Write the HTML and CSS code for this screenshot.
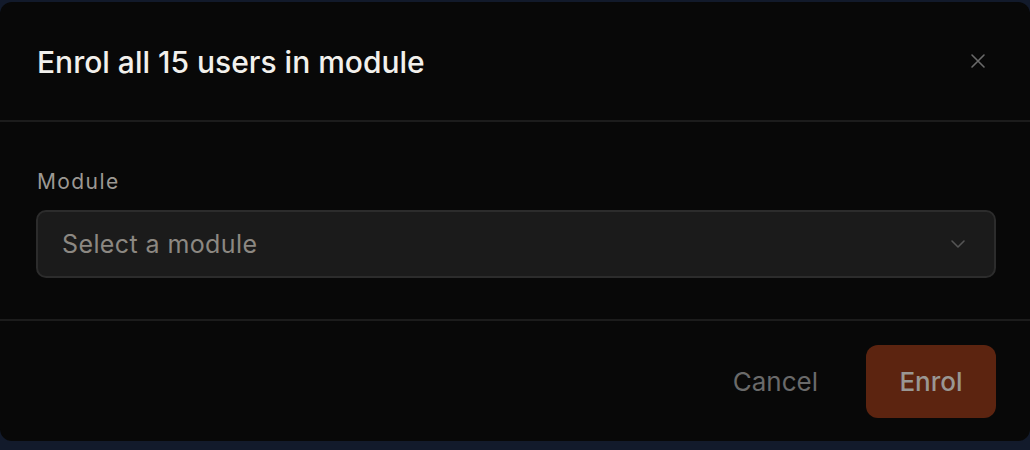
FILE: index.html
```html
<!DOCTYPE html>
<html lang="en">
<head>
<meta charset="utf-8">
<title>Enrol users</title>
<link rel="stylesheet" href="styles.css">
</head>
<body>
<div class="backdrop">
  <div class="dialog" role="dialog" aria-labelledby="dlg-title">
    <header class="dialog-header">
      <h2 id="dlg-title" class="dialog-title">Enrol all 15 users in module</h2>
      <button class="close-btn" aria-label="Close">
        <svg width="16" height="16" viewBox="0 0 16 16" fill="none" stroke="currentColor" stroke-width="1.6" stroke-linecap="round"><path d="M2 2 L14 14 M14 2 L2 14"/></svg>
      </button>
    </header>
    <div class="dialog-body">
      <label class="field-label">Module</label>
      <div class="select">
        <span class="select-placeholder">Select a module</span>
        <svg class="chevron" width="16" height="10" viewBox="0 0 16 10" fill="none" stroke="currentColor" stroke-width="1.6" stroke-linecap="round" stroke-linejoin="round"><path d="M2 2 L8 8 L14 2"/></svg>
      </div>
    </div>
    <footer class="dialog-footer">
      <button class="btn-cancel">Cancel</button>
      <button class="btn-primary">Enrol</button>
    </footer>
  </div>
</div>
</body>
</html>
```

FILE: styles.css
```css
html, body {
  margin: 0;
  padding: 0;
}
body {
  background: #121a2b;
  font-family: Inter, "Noto Sans", "Liberation Sans", sans-serif;
  width: 1030px;
  height: 450px;
  overflow: hidden;
}
.backdrop {
  padding-top: 2px;
}
.dialog {
  width: 1030px;
  height: 439px;
  background: #080808;
  border-radius: 12px;
  display: flex;
  flex-direction: column;
}
.dialog-header {
  height: 120px;
  box-sizing: border-box;
  padding: 0 34px 0 37px;
  display: flex;
  align-items: center;
  justify-content: space-between;
  border-bottom: 2px solid #1c1c1c;
}
.dialog-title {
  margin: 0;
  font-size: 30px;
  font-weight: 500;
  letter-spacing: 0;
  color: #f2f0ec;
  padding-top: 2px;
}
.close-btn {
  background: none;
  border: none;
  padding: 0;
  margin-right: 10px;
  color: #6a6a6a;
  display: flex;
  cursor: pointer;
}
.dialog-body {
  padding: 48px 34px 41px 36px;
  display: flex;
  flex-direction: column;
  border-bottom: 2px solid #1c1c1c;
}
.field-label {
  font-size: 21px;
  line-height: 24px;
  letter-spacing: 1.4px;
  color: #9c9893;
  padding-left: 1px;
  margin-bottom: 16px;
}
.select {
  height: 68px;
  box-sizing: border-box;
  background: #1b1b1b;
  border: 2px solid #2c2c2c;
  border-radius: 10px;
  display: flex;
  align-items: center;
  justify-content: space-between;
  padding: 0 28px 0 24px;
}
.select-placeholder {
  font-size: 25px;
  color: #8c8882;
  letter-spacing: 0.4px;
}
.chevron {
  color: #555555;
}
.dialog-footer {
  flex: 1;
  display: flex;
  align-items: center;
  justify-content: flex-end;
  padding: 0 34px 0 36px;
  gap: 48px;
}
.btn-cancel {
  background: none;
  border: none;
  font-family: inherit;
  font-size: 26px;
  color: #6a6a6a;
  padding: 0;
  cursor: pointer;
}
.btn-primary {
  width: 130px;
  height: 73px;
  border: none;
  border-radius: 12px;
  background: #5c2410;
  color: #9a9793;
  font-family: inherit;
  font-size: 26px;
  font-weight: 500;
  cursor: pointer;
}
```
